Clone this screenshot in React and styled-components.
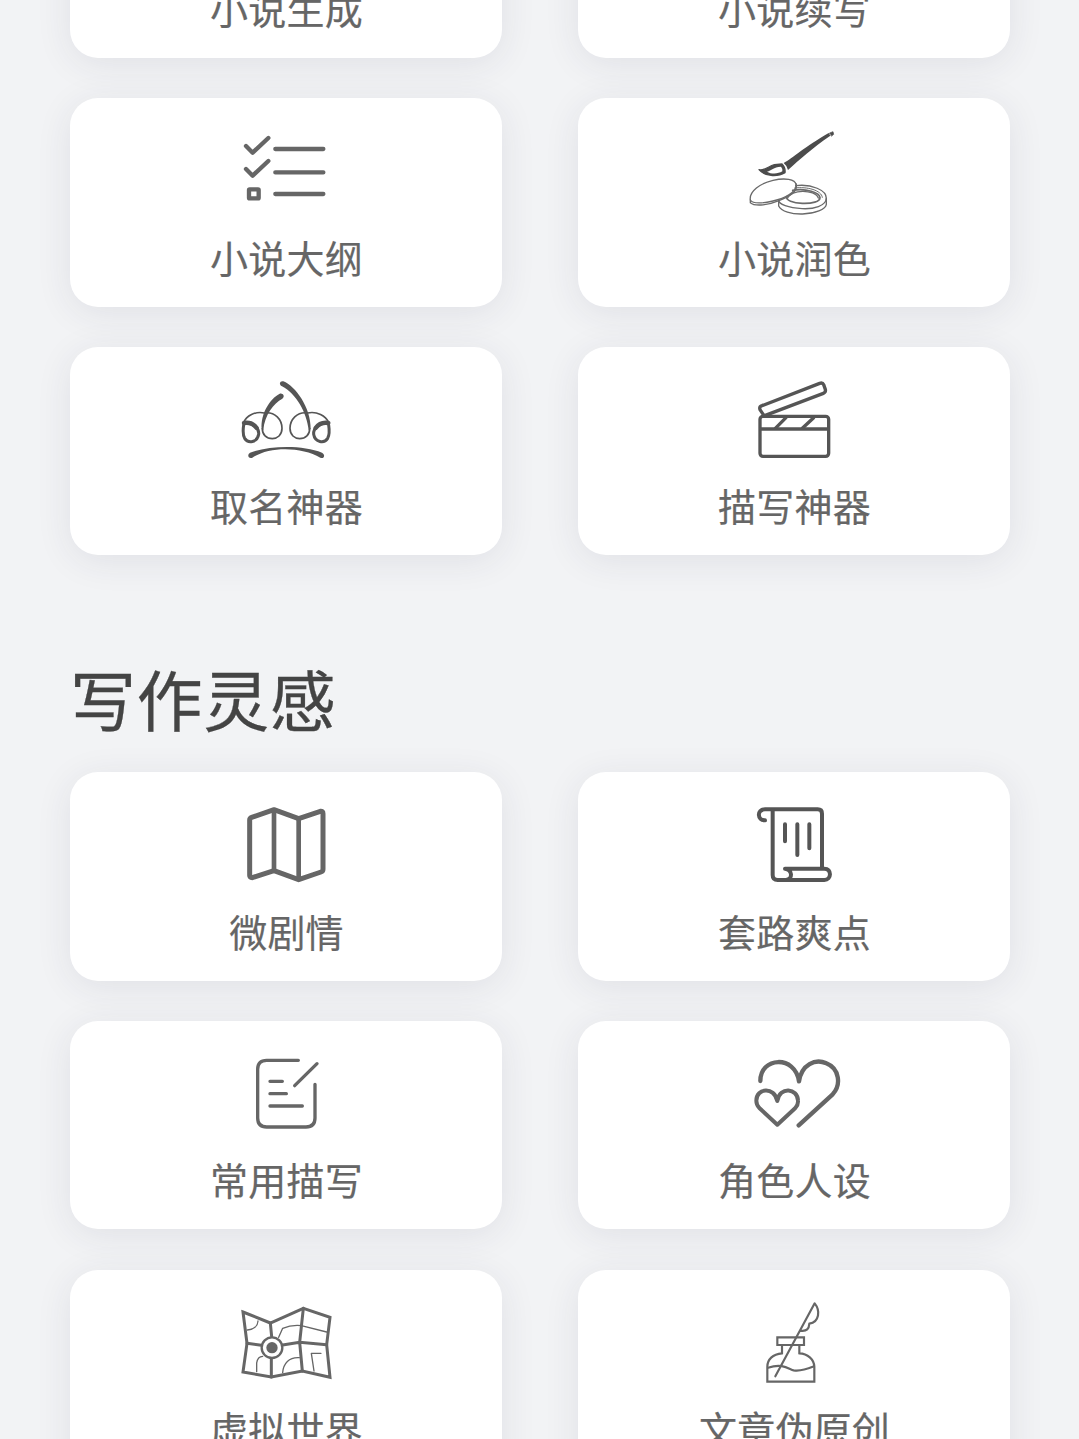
import React from "react";
import styled, { createGlobalStyle } from "styled-components";

const OutlineIcon = () => (
    <Icon viewBox="-12 0 540 330" $weight={13}>
        <path d="M138 78 L158 98 L205 54 M138 147 L158 167 L205 123" />
        <path d="M226 87 H370 M226 157 H370 M226 222 H370" />
        <rect x="147" y="208" width="29" height="27" rx="2" />
    </Icon>
);

const PolishIcon = () => (
    <Icon viewBox="-3 0 540 330" $weight={4} $color="#6a6a6a">
        <path d="M162 149 C182 153 191 137 208 134 L231 132 Q242 143 240 158 C222 169 183 173 162 149 Z" fill="#4c4c4c" stroke="#4c4c4c" />
        <path d="M186 155 C200 151 205 141 228 140 Q234 147 232 154 C219 162 200 163 186 155 Z" fill="#fff" stroke="none" />
        <path d="M236 129 C262 115 300 80 371 39 L376 47 C322 84 285 117 249 150 Q246 137 236 129 Z" fill="#4c4c4c" stroke="none" />
        <path d="M374 39 L384 35 L386 43 L380 48 Z" fill="#4c4c4c" stroke="#4c4c4c" strokeWidth="2" />
        <path d="M136 240 C132 214 166 190 204 181 C239 173 271 177 273 194 C276 216 239 235 204 243 C173 250 143 251 136 240 Z" />
        <path d="M136 240 V248 C151 261 194 254 222 242 C252 230 274 215 274 201 V192" />
        <path d="M272 197 C320 191 365 211 364 235 C363 258 326 268 291 266 C251 264 220 253 221 240" />
        <path d="M221 242 V258 C229 274 259 283 293 282 C330 281 362 268 364 253 V235" />
        <path d="M269 204 C307 199 350 211 352 232" strokeWidth="3" />
        <path d="M263 211 C304 204 344 218 345 233 C345 245 321 251 292 250 C263 249 243 241 244 230" strokeWidth="5" />
        <path d="M248 234 C256 208 330 207 340 234" strokeWidth="4" />
    </Icon>
);

const CrownIcon = () => (
    <Icon viewBox="-12 -3 540 330" $weight={5} $color="#555">
        <path d="M193 129 C165 123 139 138 131 157 M192 129 C226 124 246 150 246 175 C246 195 232 206 217 206 C199 206 187 194 187 176" />
        <path d="M323 129 C351 123 377 138 386 157 M324 129 C290 124 270 150 270 175 C270 195 284 206 299 206 C317 206 329 194 329 176" />
        <path d="M238 72 C211 86 181 130 185 178 L190 180 C194 135 221 100 247 86 C257 79 247 67 238 72 Z" fill="#555" stroke="none" />
        <path d="M250 34 C286 48 333 113 332 177 L326 180 C320 127 289 72 246 49 C235 43 240 31 250 34 Z" fill="#555" stroke="none" />
        <path d="M132 160 C157 157 178 173 176 193 C172 218 144 221 134 205 C128 194 129 178 131 165" strokeWidth="9" />
        <path d="M385 160 C360 157 339 173 341 193 C345 218 373 221 383 205 C389 194 388 178 386 165" strokeWidth="9" />
        <path d="M132 159 C145 157 160 160 170 174 M385 159 C372 157 357 160 347 174" strokeWidth="13" />
        <path d="M150 248 C211 226 309 225 366 248 C378 255 371 268 361 263 C306 230 208 228 157 263 C144 267 141 254 150 248 Z" fill="#555" stroke="none" />
    </Icon>
);

const ClapperIcon = () => (
    <Icon viewBox="-3 -3 540 330" $weight={10} $color="#555">
        <rect x="165" y="139" width="206" height="120" rx="9" />
        <path d="M167 177 H369 M177 137 L165 119 Q162 110 171 107 L344 40 Q353 37 356 44 L361 58 Q363 67 355 70 L181 136" />
        <path d="M243 143 L211 175 M326 143 L292 175" />
    </Icon>
);

const MapIcon = () => (
    <Icon viewBox="-12 -3 540 330" $weight={15}>
        <path d="M155 67 L222 44 L296 71 L361 49 Q369 48 369 56 V223 Q369 229 363 231 L296 254 L222 227 L157 248 Q149 248 149 241 V75 Q149 69 155 67 Z" />
        <path d="M222 46 V226 M296 72 V252" strokeWidth="14" />
    </Icon>
);

const ScrollIcon = () => (
    <Icon viewBox="-3 -3 540 330" $weight={12} $color="#555">
        <path d="M180 76 C157 77 154 43 180 43 H338 Q351 43 351 56 V219" />
        <path d="M203 45 V240 Q203 255 218 255 H358 C380 255 381 221 358 221 H240 C263 224 264 253 243 255" />
        <path d="M240 88 V139 M277 88 V180 M313 88 V160" />
    </Icon>
);

const NoteIcon = () => (
    <Icon viewBox="-12 -6 540 330" $weight={10}>
        <path d="M295 46 H200 Q173 46 173 73 V219 Q173 246 200 246 H318 Q345 246 345 219 V118" />
        <path d="M284 122 L351 56 M210 109 H247 M210 146 H259 M210 183 H307" />
    </Icon>
);

const HeartsIcon = () => (
    <Icon viewBox="-3 -6 540 330" $weight={13}>
        <path d="M166 108 C166 35 270 29 282 109 C290 58 331 40 364 55 C404 71 409 120 383 148 L281 241" />
        <path d="M217 168 C208 123 154 129 154 167 Q154 179 163 189 L217 239 L271 189 Q280 179 279 167 C278 129 224 123 217 168 Z" strokeWidth="12" />
    </Icon>
);

const WorldIcon = () => (
    <Icon viewBox="-12 6 540 330" $weight={9}>
        <g strokeLinejoin="miter">
            <path d="M129 66 L211 99 L310 55 L390 82 L380 164 L390 262 L307 243 L214 261 L129 246 L141 160 Z" />
            <path d="M211 99 L215 140 M214 204 V261 M310 55 L299 157 L307 243 M141 160 L184 166 M248 165 L299 157 L380 164" />
        </g>
        <path d="M142 120 C161 119 173 108 174 93 M236 142 L248 115 Q274 104 304 107 L380 126 M170 245 V219 Q173 199 188 199 M248 248 C250 220 267 201 298 203 M342 243 L334 190 H363" strokeWidth="4" />
        <circle cx="216" cy="173" r="31" fill="#fff" strokeWidth="7" />
        <circle cx="216" cy="173" r="17" fill="#666" stroke="none" />
    </Icon>
);

const InkIcon = () => (
    <Icon viewBox="42 6 540 330" $weight={6.5}>
        <g strokeLinejoin="miter">
            <path d="M262 142 H342 V165 H262 Z M276 166 V190 C248 192 232 209 232 230 V275 H373 V230 C372 208 353 191 328 190 V166" />
            <path d="M234 233 C279 219 296 237 311 241 C333 245 352 237 372 229" />
        </g>
        <path d="M256 259 L374 40 C391 61 389 96 358 101 C357 116 351 125 331 122" />
    </Icon>
);

const novelTools = [
    { title: "小说生成" },
    { title: "小说续写" },
    { title: "小说大纲", icon: <OutlineIcon /> },
    { title: "小说润色", icon: <PolishIcon /> },
    { title: "取名神器", icon: <CrownIcon /> },
    { title: "描写神器", icon: <ClapperIcon /> },
];

const ideaTools = [
    { title: "微剧情", icon: <MapIcon /> },
    { title: "套路爽点", icon: <ScrollIcon /> },
    { title: "常用描写", icon: <NoteIcon /> },
    { title: "角色人设", icon: <HeartsIcon /> },
    { title: "虚拟世界", icon: <WorldIcon /> },
    { title: "文章伪原创", icon: <InkIcon /> },
];

const ToolGrid = ({ tools }) => (
    <Grid>
        {tools.map(({ title, icon }) => (
            <Card key={title}>
                <IconSlot>{icon}</IconSlot>
                <Label>{title}</Label>
            </Card>
        ))}
    </Grid>
);

const App = () => {
    return (
        <Screen>
            <GlobalStyle />
            <Content>
                <ToolGrid tools={novelTools} />
                <Heading>写作灵感</Heading>
                <ToolGrid tools={ideaTools} />
            </Content>
        </Screen>
    );
};

const GlobalStyle = createGlobalStyle`
    * {
        box-sizing: border-box;
        margin: 0;
        padding: 0;
    }
    body {
        background: #f2f3f5;
        font-family: "Noto Sans CJK SC", "Noto Sans", sans-serif;
    }
`;

const Screen = styled.main`
    height: 1439px;
    overflow: hidden;
`;

/* the list is scrolled, so the first row is cut by the top edge */
const Content = styled.div`
    margin-top: -150.6px;
    padding: 0 69px 0 70px;
`;

const Grid = styled.section`
    display: grid;
    grid-template-columns: 432px 432px;
    grid-auto-rows: 208.4px;
    gap: 40.4px 76px;
`;

const Card = styled.div`
    display: flex;
    flex-direction: column;
    align-items: center;
    padding-top: 22px;
    border-radius: 28px;
    background: #fff;
    box-shadow: 0 6px 36px rgba(40, 48, 75, 0.09);
`;

const IconSlot = styled.div`
    width: 180px;
    height: 110px;
`;

const Icon = styled.svg`
    display: block;
    width: 180px;
    height: 110px;
    fill: none;
    stroke: ${({ $color }) => $color || "#666"};
    stroke-width: ${({ $weight }) => $weight};
    stroke-linecap: round;
    stroke-linejoin: round;
`;

const Label = styled.p`
    margin-top: 2.5px;
    padding-left: 1px;
    font-size: 38px;
    line-height: 48px;
    letter-spacing: 0.2px;
    white-space: nowrap;
    color: #666;
    -webkit-text-stroke: 0.2px #666;
`;

const Heading = styled.h2`
    height: 216.8px;
    padding-top: 94px;
    font-size: 66px;
    font-weight: 400;
    line-height: 96px;
    letter-spacing: 0.6px;
    color: #444;
    -webkit-text-stroke: 0.3px #444;
`;

export default App;
